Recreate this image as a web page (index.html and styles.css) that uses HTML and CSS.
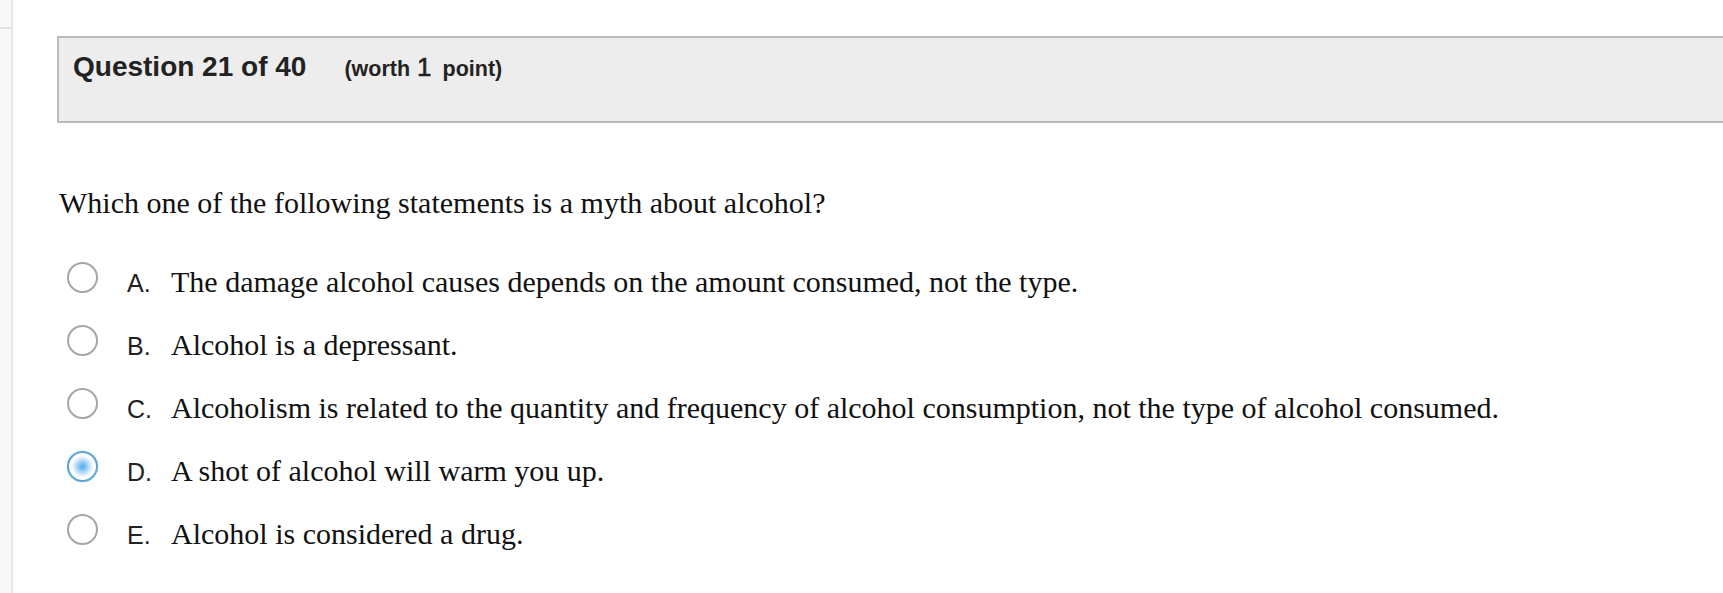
FILE: index.html
```html
<!DOCTYPE html>
<html lang="en">
<head>
<meta charset="utf-8">
<title>Question 21 of 40</title>
<link rel="stylesheet" href="styles.css">
</head>
<body>
<div class="page">
  <aside class="rail"><div class="rail-top"></div></aside>
  <main class="content">
    <header class="qhead">
      <span class="qnum">Question 21 of 40</span><span class="worth">(worth <span class="num">1</span> point)</span>
    </header>
    <p class="prompt">Which one of the following statements is a myth about alcohol?</p>
    <ul class="options">
      <li class="option"><span class="radio"></span><span class="otext"><span class="label">A.</span>The damage alcohol causes depends on the amount consumed, not the type.</span></li>
      <li class="option"><span class="radio"></span><span class="otext"><span class="label">B.</span>Alcohol is a depressant.</span></li>
      <li class="option"><span class="radio"></span><span class="otext"><span class="label">C.</span>Alcoholism is related to the quantity and frequency of alcohol consumption, not the type of alcohol consumed.</span></li>
      <li class="option"><span class="radio radio-on"></span><span class="otext"><span class="label">D.</span>A shot of alcohol will warm you up.</span></li>
      <li class="option"><span class="radio"></span><span class="otext"><span class="label">E.</span>Alcohol is considered a drug.</span></li>
    </ul>
  </main>
</div>
</body>
</html>
```
FILE: styles.css
```css
html, body {
  margin: 0;
  padding: 0;
  background: #ffffff;
}
body {
  overflow: hidden;
  width: 1723px;
  height: 593px;
}
.page {
  display: flex;
  min-height: 593px;
}
.rail {
  width: 11px;
  flex: 0 0 11px;
  background: #f8f8f8;
  border-right: 2px solid #e6e6e6;
}
.rail-top {
  height: 27px;
  border-bottom: 2px solid #e2e2e2;
}
.content {
  flex: 1;
  min-width: 0;
  padding-left: 44px;
  padding-top: 36px;
}
.qhead {
  box-sizing: border-box;
  height: 87px;
  background: #ededed;
  border: 2px solid #bababa;
  border-right: none;
  padding: 13px 0 0 14px;
  font-family: "Liberation Sans", Arial, sans-serif;
  font-weight: bold;
  color: #222222;
  line-height: 32px;
  white-space: nowrap;
}
.qnum {
  font-size: 28px;
}
.worth {
  font-size: 21.5px;
  margin-left: 38px;
}
.num {
  font-size: 26px;
  font-weight: normal;
  -webkit-text-stroke: 0.6px #222222;
  margin: 0 5px 0 1px;
}
.prompt {
  margin: 63px 0 0 0;
  padding-left: 2px;
  font-family: "Liberation Serif", "Times New Roman", serif;
  font-size: 30px;
  line-height: 34px;
  color: #111111;
}
.options {
  list-style: none;
  margin: 42px 0 0 0;
  padding: 0;
  display: flex;
  flex-direction: column;
  gap: 23px;
}
.option {
  display: flex;
  align-items: flex-start;
}
.radio {
  box-sizing: border-box;
  flex: 0 0 31px;
  width: 31px;
  height: 31px;
  margin-left: 10px;
  margin-right: 29px;
  border: 2px solid #a6a6a6;
  border-radius: 50%;
  background: #ffffff;
}
.radio-on {
  border-color: #5ba5d3;
  background: radial-gradient(circle, #55acef 0, #7cbff2 3px, #c4e2f8 7px, #ffffff 11px);
  box-shadow: 0 0 2px rgba(120, 180, 225, 0.45);
}
.otext {
  font-family: "Liberation Serif", "Times New Roman", serif;
  font-size: 30px;
  line-height: 40px;
  height: 40px;
  color: #111111;
  white-space: nowrap;
}
.label {
  display: inline-block;
  width: 44px;
  font-family: "Liberation Sans", Arial, sans-serif;
  font-size: 25px;
  line-height: 24px;
  color: #222222;
}
```
